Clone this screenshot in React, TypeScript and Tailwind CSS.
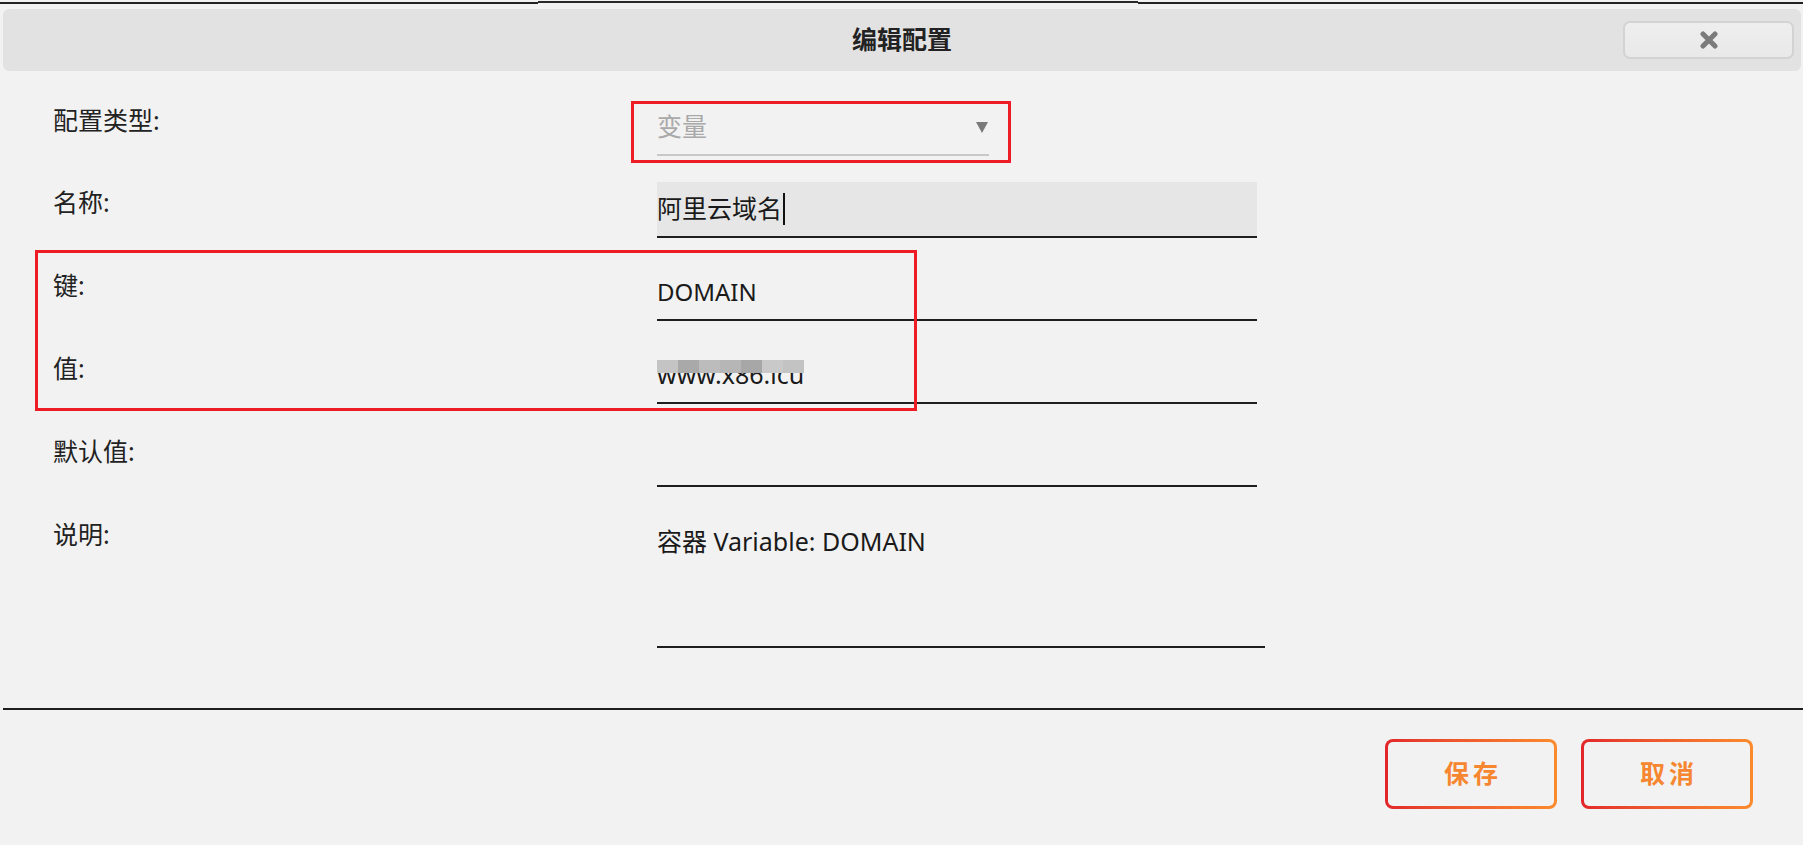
import React from 'react'

const font = { fontFamily: '"Noto Sans", "Noto Sans CJK SC", sans-serif' }

const mosaic = ['#c4c4c4', '#a9a9a9', '#bcbcbc', '#b6b6b6', '#a7a7a7', '#c9c9c9', '#c3c3c3']

const Label = ({ text }: { text: string }) => (
  <div className="w-[657px] shrink-0 pl-[53px] h-[40px] leading-[40px] text-[25px] text-[#222]">{text}</div>
)

const GradientButton = ({ text }: { text: string }) => (
  <button className="w-[172px] h-[70px] rounded-[8px] p-[3px] bg-gradient-to-r from-[#e2252b] to-[#fb8b2d]">
    <span className="flex w-full h-full items-center justify-center rounded-[5px] bg-[#f2f2f2] text-[25px] font-bold tracking-[4px] pl-[4px] text-[#f6862f]">
      {text}
    </span>
  </button>
)

export default function App() {
  return (
    <div className="relative w-full h-[845px] overflow-hidden bg-[#f2f2f2]" style={font}>
      {/* top edge of the window behind */}
      <div className="flex h-[5px]">
        <div className="w-[538px] mt-[2px] h-[2px] bg-[#222]" />
        <div className="w-[600px] mt-[1px] h-[2px] bg-[#2a2a2a]" />
        <div className="flex-1 mt-[2px] h-[2px] bg-[#222]" />
      </div>

      {/* Header */}
      <div className="mt-[4px] ml-[3px] mr-[2px] h-[62px] rounded-[6px] bg-[#e2e2e2] flex items-center relative">
        <div className="flex-1 text-center text-[25px] font-bold text-[#222]">编辑配置</div>
        <button className="absolute right-[7px] top-[12px] w-[171px] h-[38px] rounded-[7px] border-2 border-[#d3d3d3] bg-gradient-to-b from-[#eeeeee] to-[#e9e9e9] flex items-center justify-center">
          <svg width="20" height="18" viewBox="0 0 20 18">
            <path d="M4 3 L16 15 M16 3 L4 15" stroke="#7b7b7b" strokeWidth="5" strokeLinecap="round" />
          </svg>
        </button>
      </div>

      {/* Form */}
      <div className="pt-[29px] flex flex-col">
        <div className="flex">
          <Label text="配置类型:" />
          <div className="w-[332px] h-[56px] border-b-2 border-[#c8c8c8] flex items-center justify-between text-[25px] text-[#a9a9a9]">
            <span>变量</span>
            <svg width="12" height="12" viewBox="0 0 12 12" className="mr-[1px]">
              <path d="M0 1 H12 L6 12 Z" fill="#7a7a7a" />
            </svg>
          </div>
        </div>

        <div className="flex mt-[26px]">
          <Label text="名称:" />
          <div className="w-[600px] h-[56px] bg-[#e6e6e6] border-b-2 border-[#1e1e1e] flex items-center text-[25px] text-[#1a1a1a]">
            <span>阿里云域名</span>
            <span className="w-[2px] h-[32px] bg-[#111] ml-[1px]" />
          </div>
        </div>

        <div className="flex mt-[27px]">
          <Label text="键:" />
          <div className="w-[600px] h-[56px] border-b-2 border-[#1e1e1e] flex items-center text-[24px] text-[#1a1a1a]">DOMAIN</div>
        </div>

        <div className="flex mt-[27px]">
          <Label text="值:" />
          <div className="relative w-[600px] h-[56px] border-b-2 border-[#1e1e1e] flex items-center text-[25px] text-[#1a1a1a]">
            <span>www.x86.icu</span>
            <div className="absolute left-0 top-[12px] flex h-[13px]">
              {mosaic.map((c, i) => (
                <div key={i} className="w-[21px] h-full" style={{ background: c }} />
              ))}
            </div>
          </div>
        </div>

        <div className="flex mt-[27px]">
          <Label text="默认值:" />
          <div className="w-[600px] h-[56px] border-b-2 border-[#1e1e1e]" />
        </div>

        <div className="flex mt-[27px]">
          <Label text="说明:" />
          <div className="w-[608px] h-[134px] border-b-2 border-[#1e1e1e] pt-[13px] leading-[28px] text-[25px] text-[#1a1a1a]">
            容器 Variable: DOMAIN
          </div>
        </div>
      </div>

      {/* Footer */}
      <div className="mt-[60px] ml-[3px] h-[2px] bg-[#1e1e1e]" />
      <div className="mt-[29px] flex justify-end gap-[24px] pr-[50px]">
        <GradientButton text="保存" />
        <GradientButton text="取消" />
      </div>

      {/* annotation boxes */}
      <div className="absolute left-[631px] top-[101px] w-[380px] h-[62px] border-[3px] border-[#ee1c25]" />
      <div className="absolute left-[35px] top-[250px] w-[882px] h-[161px] border-[3px] border-[#ee1c25]" />
    </div>
  )
}
